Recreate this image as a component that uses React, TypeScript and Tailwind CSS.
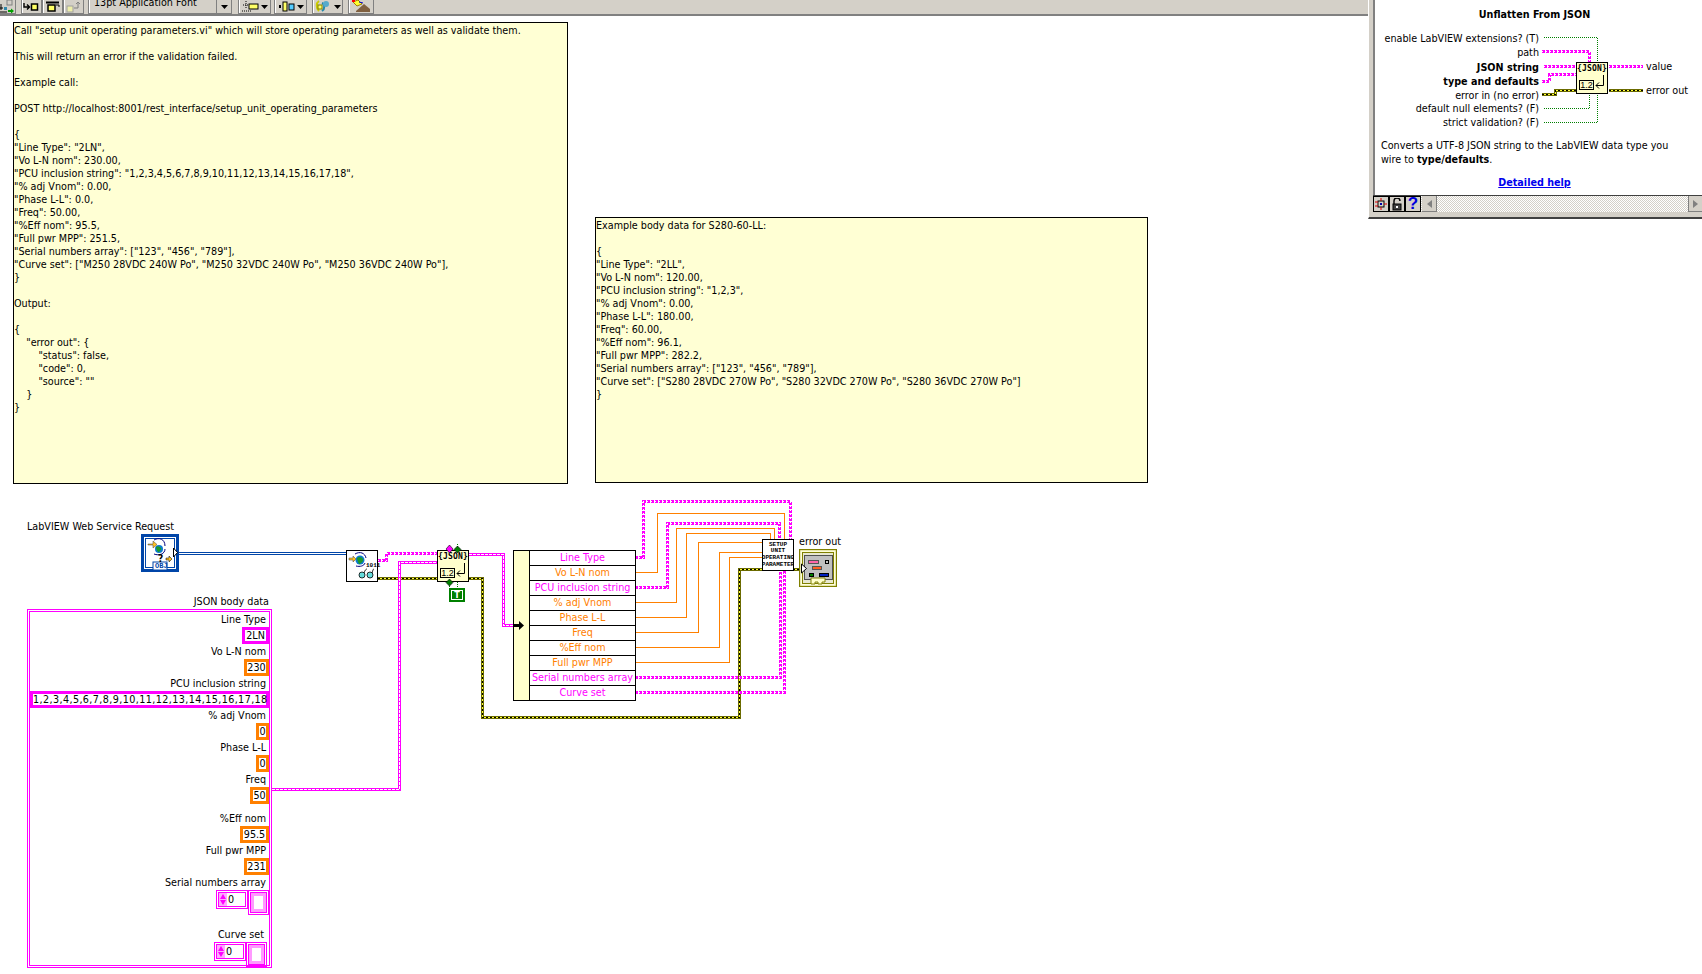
import React from "react";

const PINK = "#ff00ff";
const ORANGE = "#ff8000";

const note1 = `Call "setup unit operating parameters.vi" which will store operating parameters as well as validate them.

This will return an error if the validation failed.

Example call:

POST http://localhost:8001/rest_interface/setup_unit_operating_parameters

{
"Line Type": "2LN",
"Vo L-N nom": 230.00,
"PCU inclusion string": "1,2,3,4,5,6,7,8,9,10,11,12,13,14,15,16,17,18",
"% adj Vnom": 0.00,
"Phase L-L": 0.0,
"Freq": 50.00,
"%Eff nom": 95.5,
"Full pwr MPP": 251.5,
"Serial numbers array": ["123", "456", "789"],
"Curve set": ["M250 28VDC 240W Po", "M250 32VDC 240W Po", "M250 36VDC 240W Po"],
}

Output:

{
    "error out": {
        "status": false,
        "code": 0,
        "source": ""
    }
}`;

const note2 = `Example body data for S280-60-LL:

{
"Line Type": "2LL",
"Vo L-N nom": 120.00,
"PCU inclusion string": "1,2,3",
"% adj Vnom": 0.00,
"Phase L-L": 180.00,
"Freq": 60.00,
"%Eff nom": 96.1,
"Full pwr MPP": 282.2,
"Serial numbers array": ["123", "456", "789"],
"Curve set": ["S280 28VDC 270W Po", "S280 32VDC 270W Po", "S280 36VDC 270W Po"]
}`;

type Pt = string;

function StrWire({ d, thick }: { d: Pt; thick?: boolean }) {
  if (thick) {
    return (
      <g fill="none" shapeRendering="crispEdges">
        <polyline points={d} stroke={PINK} strokeWidth={3} />
        <polyline points={d} stroke="#ffffff" strokeWidth={1} strokeDasharray="3 1" />
      </g>
    );
  }
  return (
    <g fill="none" shapeRendering="crispEdges">
      <polyline points={d} stroke={PINK} strokeWidth={3} strokeDasharray="3 1" />
      <polyline points={d} stroke="#ffffff" strokeWidth={1} strokeDasharray="1 3" />
    </g>
  );
}
function ErrWire({ d }: { d: Pt }) {
  return (
    <g fill="none" shapeRendering="crispEdges">
      <polyline points={d} stroke="#6b6b00" strokeWidth={3} />
      <polyline points={d} stroke="#ffff33" strokeWidth={1} />
      <polyline points={d} stroke="#000000" strokeWidth={1} strokeDasharray="2 2" />
    </g>
  );
}
function NumWire({ d }: { d: Pt }) {
  return <polyline points={d} fill="none" stroke={ORANGE} strokeWidth={1} shapeRendering="crispEdges" />;
}
function BoolWire({ d }: { d: Pt }) {
  return <polyline points={d} fill="none" stroke="#008000" strokeWidth={1} strokeDasharray="1 1" shapeRendering="crispEdges" />;
}

function JsonNode({ className }: { className: string }) {
  return (
    <div className={`absolute h-[32px] w-[32px] border border-black bg-[#ffffcc] ${className}`}>
      <div className="text-center font-['DejaVu_Sans_Mono',monospace] text-[8px] font-bold leading-[12px] tracking-[0.2px] text-black whitespace-nowrap">{"{JSON}"}</div>
      <div className="mt-[5px] flex items-center pl-[2px]">
        <div className="h-[10px] w-[15px] border border-black text-center font-['Liberation_Sans',sans-serif] text-[9px] leading-[9px] text-black">1.2</div>
        <svg width="11" height="14" viewBox="0 0 11 14" className="-mt-[6px]">
          <path d="M9.5 0v10.5H2M5 7.5l-3 3 3 3" fill="none" stroke="#000" strokeWidth="1" />
        </svg>
      </div>
    </div>
  );
}

function Field({ label, value, tone, w, extra, textClass }: { label: string; value: string; tone: "pink" | "orange"; w: string; extra?: string; textClass?: string }) {
  return (
    <div className={`flex flex-col items-end ${extra ?? ""}`}>
      <div className="h-[15px] pr-[3px] leading-[15px] whitespace-nowrap">{label}</div>
      <div className={`h-[17px] ${w} border-[3px] bg-white text-center leading-[11px] whitespace-nowrap ${tone === "pink" ? "border-[#ff00ff]" : "border-[#ff8000]"} ${textClass ?? ""}`}>{value}</div>
    </div>
  );
}

function ArrayField({ label, extra }: { label: string; extra?: string }) {
  return (
    <div className={`flex flex-col items-end ${extra ?? ""}`}>
      <div className="h-[15px] pr-[3px] leading-[15px] whitespace-nowrap">{label}</div>
      <div className="flex items-start">
        <div className="flex h-[19px] w-[32px] items-center border-[3px] border-double border-[#ff00ff] bg-white">
          <div className="flex h-[13px] w-[8px] shrink-0 flex-col items-center justify-center gap-[1px] bg-[#ffaaff]">
            <svg width="6" height="5" viewBox="0 0 6 5"><path d="M3 0 6 5H0z" fill="#ff00ff" /></svg>
            <svg width="6" height="5" viewBox="0 0 6 5"><path d="M3 5 6 0H0z" fill="#ff00ff" /></svg>
          </div>
          <div className="pl-[1px] leading-[13px]">0</div>
        </div>
        <div className="h-[25px] w-[21px] border border-[#ff00ff] p-[2px]">
          <div className="h-full w-full border-[3px] border-[#ff99ff] bg-white outline outline-[#ff00ff]" />
        </div>
      </div>
    </div>
  );
}

const rows: [string, string][] = [
  ["Line Type", "text-[#ff00ff]"],
  ["Vo L-N nom", "text-[#ff8000]"],
  ["PCU inclusion string", "text-[#ff00ff]"],
  ["% adj Vnom", "text-[#ff8000]"],
  ["Phase L-L", "text-[#ff8000]"],
  ["Freq", "text-[#ff8000]"],
  ["%Eff nom", "text-[#ff8000]"],
  ["Full pwr MPP", "text-[#ff8000]"],
  ["Serial numbers array", "text-[#ff00ff]"],
  ["Curve set", "text-[#ff00ff]"],
];

function ToolBtn({ w, children, className }: { w: string; children?: React.ReactNode; className?: string }) {
  return (
    <div className={`flex h-[14px] items-center justify-center border-r border-b border-l border-[#808080] shadow-[inset_1px_0_0_#ffffff] ${w} ${className ?? ""}`}>{children}</div>
  );
}

function Caret() {
  return <svg width="7" height="4" viewBox="0 0 7 4"><path d="M0 0h7L3.5 4z" fill="#000" /></svg>;
}

function Toolbar() {
  return (
    <div className="flex h-[16px] w-[1368px] items-start border-b-2 border-[#808080] bg-[#d4d0c8] overflow-hidden">
      <div className="h-[14px] w-[16px] border-r border-b border-[#808080]">
        <svg width="15" height="14" viewBox="0 0 15 14">
          <rect x="7" y="0" width="5" height="5" fill="#d4d0c8" stroke="#808080" />
          <path d="M0 8h3M1 4v6M0 12h7" stroke="#000" fill="none" />
          <rect x="4" y="7" width="3" height="3" fill="#38a" />
          <path d="M8 11h3" stroke="#00a000" strokeWidth="2" />
          <path d="M11 8.5l3 2.5-3 2.5z" fill="#00a000" />
        </svg>
      </div>
      <div className="ml-[5px] flex">
        <ToolBtn w="w-[21px]">
          <svg width="17" height="12" viewBox="0 0 17 12"><path d="M1 2v4h5M4 3.5 6.5 6 4 8.5" stroke="#000" strokeWidth="1.4" fill="none" /><rect x="8.5" y="3" width="6" height="6" fill="#ffff66" stroke="#000" strokeWidth="1.5" /></svg>
        </ToolBtn>
        <ToolBtn w="w-[21px]">
          <svg width="17" height="12" viewBox="0 0 17 12"><path d="M2 1.5h13" stroke="#000" strokeWidth="2" /><rect x="4" y="4" width="7" height="6" fill="#ffff66" stroke="#000" strokeWidth="1.5" /><path d="M12 4h3v2" stroke="#000" fill="none" /></svg>
        </ToolBtn>
        <ToolBtn w="w-[21px]">
          <svg width="17" height="12" viewBox="0 0 17 12"><rect x="2" y="5" width="6" height="6" fill="#eeeeaa" stroke="#a0a0a0" /><path d="M9 7h4V1M11 3l2-2 2 2" stroke="#808080" fill="none" /></svg>
        </ToolBtn>
      </div>
      <div className="ml-[4px] flex h-[14px] w-[144px] border-r border-b border-l border-[#808080] shadow-[inset_1px_0_0_#ffffff]">
        <div className="flex-1 pl-[5px] font-['DejaVu_Sans_Condensed','Liberation_Sans',sans-serif] text-[10.7px] leading-[6px] text-black whitespace-nowrap">13pt Application Font</div>
        <div className="flex w-[15px] shrink-0 items-center justify-center border-l border-[#808080]"><Caret /></div>
      </div>
      <ToolBtn w="w-[33px] ml-[6px] gap-[2px]">
        <svg width="17" height="12" viewBox="0 0 17 12"><path d="M4 0v8M1 4h6M0 10h10" stroke="#000" strokeDasharray="1 1" fill="none" /><rect x="7" y="3" width="9" height="5" fill="#ffff66" stroke="#000" /></svg>
        <Caret />
      </ToolBtn>
      <ToolBtn w="w-[33px] ml-[3px] gap-[2px]">
        <svg width="17" height="12" viewBox="0 0 17 12"><rect x="1" y="4" width="2" height="3" fill="#000" /><rect x="5" y="1" width="4" height="9" fill="#ffff66" stroke="#000" /><rect x="11" y="3" width="5" height="6" fill="#55ccff" stroke="#000" /></svg>
        <Caret />
      </ToolBtn>
      <ToolBtn w="w-[31px] ml-[5px] gap-[2px]">
        <svg width="17" height="13" viewBox="0 0 17 13"><path d="M4 1C1 3 1 8 4 11" stroke="#cccc00" strokeWidth="2" fill="none" /><path d="M7 3c3 1 3 6 0 8" stroke="#2288aa" strokeWidth="2" fill="none" /><circle cx="11" cy="4" r="3" fill="#55aacc" /><rect x="3" y="5" width="4" height="4" fill="#ffff66" stroke="#808000" /></svg>
        <Caret />
      </ToolBtn>
      <ToolBtn w="w-[26px] ml-[5px]">
        <svg width="22" height="13" viewBox="0 0 22 13"><path d="M3 2 8 0l4 4-5 2z" fill="#ffff33" stroke="#a08000" /><path d="M2 1h3" stroke="#ff0000" strokeWidth="2" /><path d="M6 11l8-7 6 5v3H6z" fill="#806040" /><path d="M9 2l4 1" stroke="#0000cc" /></svg>
      </ToolBtn>
    </div>
  );
}

function HelpWindow() {
  const tahoma = "font-['DejaVu_Sans_Condensed','Liberation_Sans',sans-serif] text-[10.7px] leading-[14px]";
  const labels: [string, string, boolean][] = [
    ["enable LabVIEW extensions? (T)", "top-[32px]", false],
    ["path", "top-[46px]", false],
    ["JSON string", "top-[61px]", true],
    ["type and defaults", "top-[75px]", true],
    ["error in (no error)", "top-[89px]", false],
    ["default null elements? (F)", "top-[102px]", false],
    ["strict validation? (F)", "top-[116px]", false],
  ];
  return (
    <div className="absolute left-[1368px] top-0 flex h-[219px] w-[334px] flex-col border-b-2 border-l border-b-[#404040] border-l-white bg-[#d4d0c8] pl-[4px] pb-[5px] text-black">
      <div className="relative flex-1 border-l-2 border-[#808080] bg-white">
        <div className={`${tahoma} pt-[8px] pr-[8px] text-center font-bold`}>Unflatten From JSON</div>
        {labels.map(([t, top, b]) => (
          <div key={t} className={`${tahoma} absolute right-[163px] ${top} whitespace-nowrap ${b ? "font-bold" : ""}`}>{t}</div>
        ))}
        <div className={`${tahoma} absolute left-[271px] top-[60px]`}>value</div>
        <div className={`${tahoma} absolute left-[271px] top-[84px]`}>error out</div>
        <svg className="absolute left-0 top-0" width="328" height="195" viewBox="1374 0 328 195">
          <BoolWire d="1543,37.5 1596.5,37.5 1596.5,62" />
          <StrWire d="1541,51.5 1588.5,51.5 1588.5,62" />
          <StrWire d="1543,66.5 1576,66.5" />
          <StrWire d="1541,81.5 1548.5,81.5 1548.5,74.5 1576,74.5" />
          <ErrWire d="1541,94.5 1554.5,94.5 1554.5,90.5 1576,90.5" />
          <BoolWire d="1543,108.5 1588.5,108.5 1588.5,94" />
          <BoolWire d="1543,122.5 1596.5,122.5 1596.5,94" />
          <StrWire d="1608,66.5 1642,66.5" />
          <ErrWire d="1608,90.5 1642,90.5" />
        </svg>
        <JsonNode className="left-[201px] top-[62px]" />
        <div className={`${tahoma} mt-[117px] pl-[6px] leading-[13px] whitespace-nowrap`}>
          Converts a UTF-8 JSON string to the LabVIEW data type you
          <br />
          wire to <b>type/defaults</b>.
        </div>
        <div className={`${tahoma} mt-[9px] pr-[8px] text-center font-bold text-[#0000ee] underline`}>Detailed help</div>
      </div>
      <div className="flex h-[17px] items-stretch border-t border-[#404040] bg-[repeating-conic-gradient(#d4d0c8_0_25%,#ffffff_0_50%)] bg-size-[2px_2px]">
        <div className="flex w-[16px] items-center justify-center border border-black bg-[#d4d0c8]">
          <svg width="12" height="12" viewBox="0 0 12 12"><rect x="3" y="3" width="6" height="6" fill="none" stroke="#000" /><path d="M0 4h3M0 8h3M9 6h3M6 0v3M6 9v3" stroke="#d00" /><path d="M5 5h2v2H5z" fill="#00a" /></svg>
        </div>
        <div className="flex w-[16px] items-center justify-center border border-black bg-[#d4d0c8]">
          <svg width="12" height="13" viewBox="0 0 12 13"><path d="M3 6V3a3 3 0 0 1 6 0" fill="none" stroke="#000" strokeWidth="1.4" /><rect x="2" y="6" width="8" height="6" fill="#404040" stroke="#000" /><rect x="5" y="8" width="2" height="2" fill="#fff" /></svg>
        </div>
        <div className="flex w-[16px] items-center justify-center border border-black bg-[#d4d0c8] font-['Liberation_Sans',sans-serif] text-[17px] font-bold leading-[14px] text-[#0000dd]">?</div>
        <div className="ml-[1px] flex w-[15px] items-center justify-center border-r border-b border-[#808080] bg-[#d4d0c8]">
          <svg width="5" height="8" viewBox="0 0 5 8"><path d="M5 0v8L0 4z" fill="#808080" /></svg>
        </div>
        <div className="flex-1" />
        <div className="flex w-[14px] items-center justify-center border-b border-l border-[#808080] bg-[#d4d0c8]">
          <svg width="5" height="8" viewBox="0 0 5 8"><path d="M0 0v8l5-4z" fill="#808080" /></svg>
        </div>
      </div>
    </div>
  );
}

export default function App() {
  return (
    <div className="relative h-[974px] w-[1702px] overflow-hidden bg-white font-['DejaVu_Sans_Condensed','Liberation_Sans',sans-serif] text-[10.7px] text-black">
      <Toolbar />
      <HelpWindow />

      {/* notes on the block diagram */}
      <pre className="absolute left-[13px] top-[22px] h-[462px] w-[555px] border border-black bg-[#ffffd4] pt-[1px] font-['DejaVu_Sans_Condensed','Liberation_Sans',sans-serif] text-[10.7px] leading-[13px] text-black">{note1}</pre>
      <pre className="absolute left-[595px] top-[217px] h-[266px] w-[553px] border border-black bg-[#ffffd4] pt-[1px] font-['DejaVu_Sans_Condensed','Liberation_Sans',sans-serif] text-[10.7px] leading-[13px] text-black">{note2}</pre>

      {/* wires */}
      <svg className="absolute left-0 top-0" width="1702" height="974" viewBox="0 0 1702 974">
        <g shapeRendering="crispEdges" fill="none">
          <path d="M178 553.5H346" stroke="#0045a8" strokeWidth="3" />
          <path d="M178 553.5H346" stroke="#ffffff" strokeWidth="1" />
        </g>
        <StrWire d="378,560.5 386.5,560.5 386.5,553.5 437,553.5" />
        <ErrWire d="378,578.5 437,578.5" />
        <ErrWire d="469,578.5 482.5,578.5 482.5,717.5 739.5,717.5 739.5,569.5 762,569.5" />
        <StrWire thick d="272,789.5 399.5,789.5 399.5,562.5 437,562.5" />
        <StrWire thick d="469,554.5 503.5,554.5 503.5,625.5 516,625.5" />
        <StrWire d="635,557.5 643.5,557.5 643.5,501.5 790.5,501.5 790.5,539" />
        <NumWire d="635,572.5 657.5,572.5 657.5,513.5 784.5,513.5 784.5,539" />
        <StrWire d="635,587.5 667.5,587.5 667.5,523.5 779.5,523.5 779.5,539" />
        <NumWire d="635,602.5 676.5,602.5 676.5,528.5 774.5,528.5 774.5,539" />
        <NumWire d="635,617.5 686.5,617.5 686.5,533.5 770.5,533.5 770.5,539" />
        <NumWire d="635,632.5 698.5,632.5 698.5,542.5 762,542.5" />
        <NumWire d="635,647.5 719.5,647.5 719.5,552.5 762,552.5" />
        <NumWire d="635,662.5 729.5,662.5 729.5,557.5 762,557.5" />
        <StrWire d="635,677.5 780.5,677.5 780.5,571" />
        <StrWire d="635,692.5 784.5,692.5 784.5,571" />
        <ErrWire d="793,569.5 800,569.5" />
        <path d="M449.5 547v4" stroke={PINK} strokeWidth="3" />
        <BoolWire d="457.5,544 457.5,550" />
        <BoolWire d="457.5,582 457.5,588" />
        <BoolWire d="449.5,582 449.5,588" />
      </svg>

      {/* LabVIEW Web Service Request terminal */}
      <div className="absolute left-[27px] top-[520px] leading-[14px] whitespace-nowrap">LabVIEW Web Service Request</div>
      <svg className="absolute left-[141px] top-[534px]" width="40" height="38" viewBox="0 0 40 38">
        <rect x="1.5" y="1.5" width="35" height="35" fill="#fff" stroke="#0045a8" strokeWidth="3" />
        <rect x="4.5" y="4.5" width="29" height="29" fill="#fff" stroke="#0045a8" />
        <path d="M13 6c5-3 11-1 11 6M24 15c0 5-6 7-11 5" fill="none" stroke="#000080" />
        <circle cx="18" cy="15" r="4" fill="#0a7ad0" />
        <path d="M15 13c2-2 4 0 5 1s-1 3-2 4-3-3-3-5z" fill="#1a9a2a" />
        <path d="M7 12h5V9l4 3.5-4 3.5v-3H7z" fill="#ffc020" stroke="#404040" strokeWidth=".5" transform="translate(0 -2)" />
        <path d="M25 24h3v-2l3 3-3 3v-2h-3z" fill="#ffc020" stroke="#000" strokeWidth=".5" />
        <rect x="12" y="28" width="14" height="8" fill="#fff" stroke="#0045a8" />
        <path d="M32.5 14v9l4-4.5z" fill="#fff" stroke="#000" />
      </svg>
      <div className="absolute left-[158px] top-[554px] text-[10px] font-bold leading-[10px]">?</div>
      <div className="absolute left-[155px] top-[562px] font-['Liberation_Mono',monospace] text-[7px] font-bold leading-[8px] text-[#0045a8]">OBJ</div>

      {/* Read request node */}
      <div className="absolute left-[346px] top-[550px] h-[32px] w-[32px] border border-black bg-white">
        <svg width="30" height="30" viewBox="0 0 30 30">
          <path d="M8 3c5-3 10-1 11 4M18 12c-1 3-5 4-9 3" fill="none" stroke="#000080" />
          <circle cx="13" cy="9" r="4.5" fill="#0a7ad0" />
          <path d="M10 7c2-2 5-1 6 1s-2 4-3 5-3-4-3-6z" fill="#1a9a2a" />
          <path d="M2 7h4V5l3 3-3 3V9H2z" fill="#ffc020" stroke="#404040" strokeWidth=".5" />
          <circle cx="15" cy="24" r="3" fill="#66dddd" stroke="#000" strokeWidth=".8" />
          <circle cx="23" cy="24" r="3" fill="#66dddd" stroke="#000" strokeWidth=".8" />
          <path d="M17 22c1-3 2-4 3-4M25 22c1-3 1-4 2-4" fill="none" stroke="#000" strokeWidth=".8" />
        </svg>
        <div className="absolute left-[19px] top-[10px] font-['Liberation_Mono',monospace] text-[6px] font-bold leading-[9px]">1011</div>
      </div>

      <JsonNode className="left-[437px] top-[550px]" />
      <svg className="absolute left-[445px] top-[545px]" width="17" height="9" viewBox="0 0 17 9">
        <path d="M4.5 0 8 4 4.5 8 1 4z" fill={PINK} stroke="#000" strokeWidth=".6" />
        <path d="M12.5 1 16 4.5 12.5 8 9 4.5z" fill="#008000" stroke="#000" strokeWidth=".6" />
      </svg>
      <svg className="absolute left-[445px] top-[578px]" width="9" height="9" viewBox="0 0 9 9">
        <path d="M4.5 1 8 4.5 4.5 8 1 4.5z" fill="#008000" stroke="#000" strokeWidth=".6" />
      </svg>
      <div className="absolute left-[449px] top-[588px] flex h-[14px] w-[16px] items-center justify-center bg-[#008000] p-[2px]">
        <div className="flex h-full w-full items-center justify-center border border-white text-[9px] font-bold leading-[9px] text-white">T</div>
      </div>

      {/* Unbundle by name */}
      <div className="absolute left-[513px] top-[550px] flex h-[151px] w-[123px] border border-black bg-white">
        <div className="relative w-[16px] shrink-0 border-r border-black bg-[#ffffcc]">
          <svg className="absolute left-0 top-[69px]" width="11" height="11" viewBox="0 0 11 11"><path d="M0 5.5h6" stroke="#000" strokeWidth="3" /><path d="M5 1l5 4.5L5 10z" fill="#000" /></svg>
        </div>
        <div className="flex-1">
          {rows.map(([t, c], i) => (
            <div key={t} className={`h-[15px] text-center leading-[14px] whitespace-nowrap ${c} ${i < 9 ? "border-b border-black" : ""}`}>{t}</div>
          ))}
        </div>
      </div>

      {/* setup unit operating parameters */}
      <div className="absolute left-[762px] top-[539px] flex h-[32px] w-[32px] flex-col items-center justify-center overflow-hidden border border-black bg-white font-['Liberation_Mono',monospace] text-[6px] font-bold leading-[6.7px] whitespace-nowrap">
        <div>SETUP</div>
        <div>UNIT</div>
        <div>OPERATING</div>
        <div>PARAMETER</div>
      </div>

      {/* error out indicator */}
      <div className="absolute left-[799px] top-[535px] leading-[14px] whitespace-nowrap">error out</div>
      <svg className="absolute left-[799px] top-[549px]" width="38" height="38" viewBox="0 0 38 38">
        <rect x=".5" y=".5" width="37" height="37" fill="#ffffd8" stroke="#808000" strokeWidth="1.4" />
        <rect x="3.5" y="3.5" width="31" height="31" fill="#e8e8d0" stroke="#808000" />
        <rect x="5.5" y="6.5" width="28" height="24" fill="#c0c0c0" stroke="#505050" />
        <rect x="9.5" y="11.5" width="10" height="3" fill="#ff66aa" stroke="#555" />
        <rect x="26.5" y="11.5" width="3" height="3" fill="#c0c0c0" stroke="#000" />
        <rect x="13.5" y="17.5" width="9" height="3" fill="#ff6020" stroke="#555" />
        <rect x="10.5" y="24.5" width="4" height="3" fill="#008000" stroke="#000" />
        <rect x="20.5" y="24.5" width="9" height="3" fill="#0020c0" stroke="#000" />
        <path d="M12 29h14v4h-3v2h-4v-2h-3v2h-4z" fill="#ffffcc" stroke="#808000" />
        <path d="M2.5 15v9l5-4.5z" fill="#fff" stroke="#000" />
      </svg>

      {/* JSON body data cluster */}
      <div className="absolute left-[27px] top-[595px] flex w-[245px] justify-end pr-[3px]">
        <span className="leading-[14px]">JSON body data</span>
      </div>
      <div className="absolute left-[27px] top-[609px] h-[359px] w-[245px] border-[3px] border-double border-[#ff00ff] bg-white">
        <div className="flex flex-col items-end">
          <Field label="Line Type" value="2LN" tone="pink" w="w-[27px]" />
          <Field label="Vo L-N nom" value="230" tone="orange" w="w-[25px]" />
          <Field label="PCU inclusion string" value="1,2,3,4,5,6,7,8,9,10,11,12,13,14,15,16,17,18" tone="pink" w="w-[239px]" textClass="tracking-[0.4px]" />
          <Field label="% adj Vnom" value="0" tone="orange" w="w-[13px]" />
          <Field label="Phase L-L" value="0" tone="orange" w="w-[13px]" />
          <Field label="Freq" value="50" tone="orange" w="w-[19px]" />
          <Field label="%Eff nom" value="95.5" tone="orange" w="w-[29px]" extra="mt-[7px]" />
          <Field label="Full pwr MPP" value="231" tone="orange" w="w-[25px]" />
          <ArrayField label="Serial numbers array" />
          <ArrayField label="Curve set" extra="mt-[12px] mr-[2px]" />
        </div>
      </div>
    </div>
  );
}
